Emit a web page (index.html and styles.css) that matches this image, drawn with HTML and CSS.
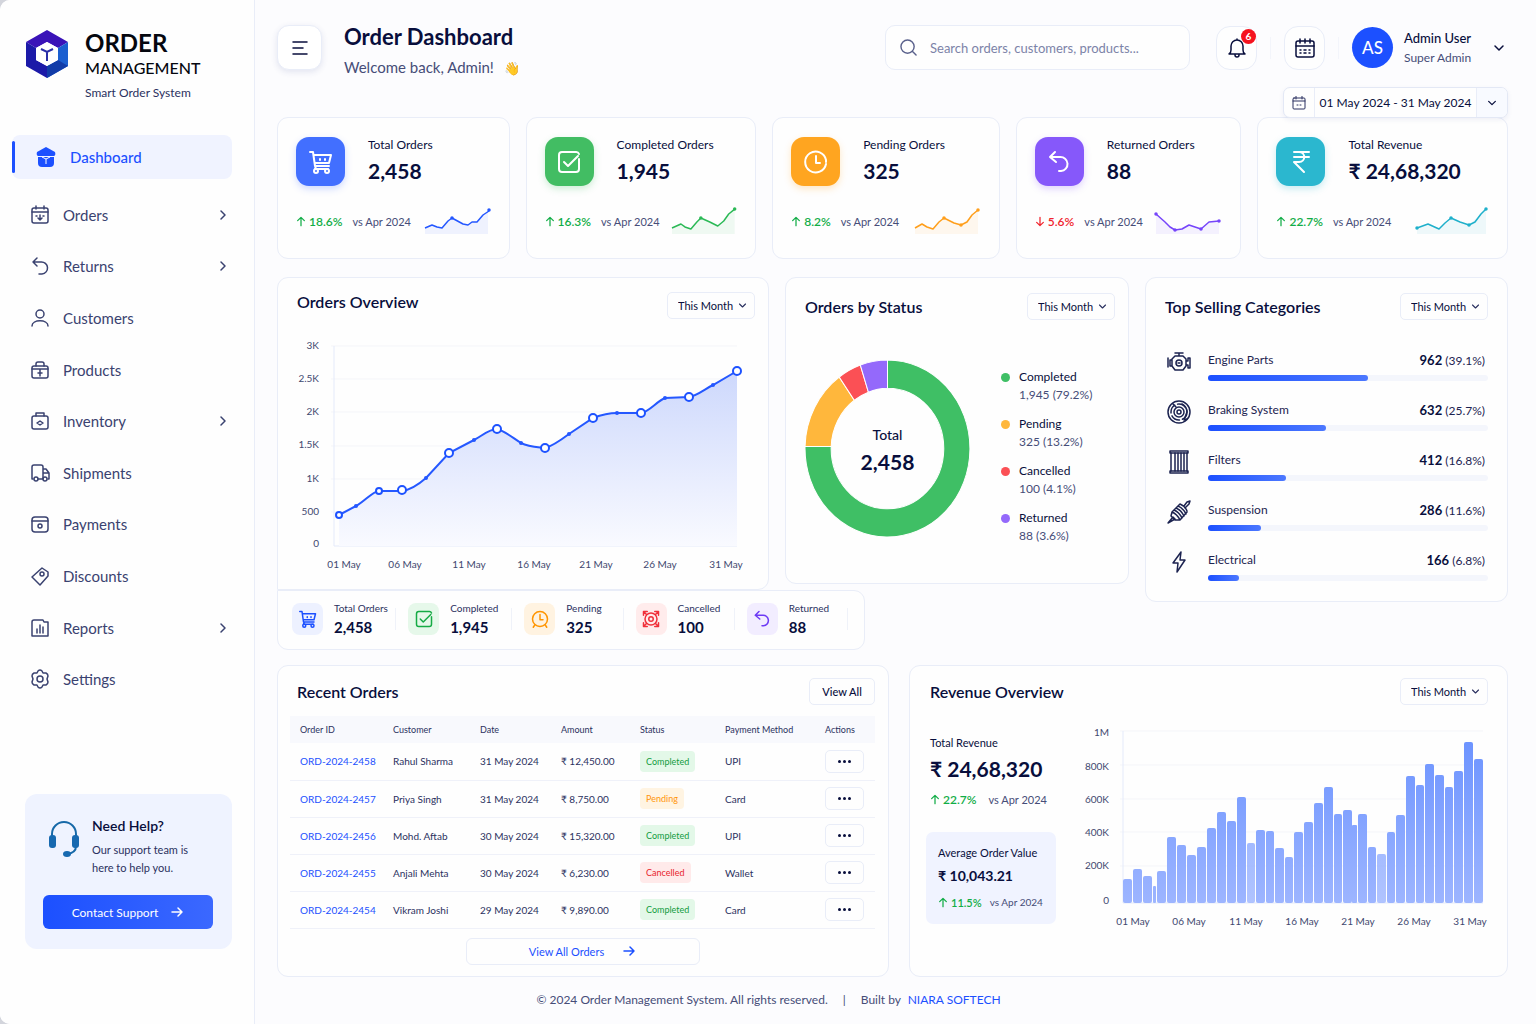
FILE: index.html
```html
<!DOCTYPE html>
<html lang="en">
<head>
    <meta charset="UTF-8">
    <meta name="viewport" content="width=device-width, initial-scale=1.0">
    <title>Order Dashboard</title>
    <link rel="stylesheet" href="styles.css">
</head>
<body>
    <!-- shared icons -->
    <svg class="sprite" aria-hidden="true">
        <symbol id="chev-right" viewBox="0 0 12 12"><path d="M4 2l4 4-4 4"/></symbol>
        <symbol id="chev-down" viewBox="0 0 12 12"><path d="M2 4l4 4 4-4"/></symbol>
        <symbol id="arrow-right" viewBox="0 0 14 14"><path d="M2 7h10M8 3l4 4-4 4"/></symbol>
        <symbol id="arrow-up" viewBox="0 0 12 12"><path d="M6 11V2M2 5l4-4 4 4"/></symbol>
        <symbol id="arrow-down" viewBox="0 0 12 12"><path d="M6 1v9M2 7l4 4 4-4"/></symbol>
        <symbol id="cart" viewBox="0 0 24 24"><path d="M1 2h3l2 14h14M5 5h17l-2 8H6M7 16l-1 3h13"/><circle cx="7" cy="21" r="2"/><circle cx="18" cy="21" r="2"/><path d="M11 9v1M16 9v1"/></symbol>
        <symbol id="check" viewBox="0 0 24 24"><path d="M22 9v10a3 3 0 0 1-3 3H5a3 3 0 0 1-3-3V5a3 3 0 0 1 3-3h14a3 3 0 0 1 3 2"/><path d="M7 12l4 4L21 6"/></symbol>
        <symbol id="clock" viewBox="0 0 24 24"><path d="M22 10a10.500 10.500 0 1 0 0 4M22 10v2"/><path d="M12 6v7h4"/></symbol>
        <symbol id="undo" viewBox="0 0 24 24"><path d="M8 2L3 7l6 5M3 7h10a7 7 0 0 1 1 14h-2"/></symbol>
    </svg>

    <div class="app">
        <aside class="sidebar">
            <div class="brand">
                <svg class="brand-logo" viewBox="0 0 42 48">
                    <path d="M21 0L42 12 32 18 21 12 10 18 0 12z" fill="#3a13b8"/>
                    <path d="M0 12l10 6v12L21 36v12L0 36z" fill="#1c1aa8"/>
                    <path d="M42 12v24L21 48V36l11-6V18z" fill="#1b5fd0"/>
                    <path d="M21 36l11-6 10 6-21 12z" fill="#123ca8"/>
                    <path d="M21 12l11 6v12l-11 6-11-6V18z" fill="#fff"/>
                    <path d="M15 19l6 3 6-3M21 22v9" fill="none" stroke="#2a2fa8" stroke-width="2"/>
                </svg>
                <div>
                    <div class="brand-name">ORDER</div>
                    <div class="brand-sub">MANAGEMENT</div>
                    <div class="brand-tag">Smart Order System</div>
                </div>
            </div>

            <a class="nav-active" href="#">
                <svg viewBox="0 0 20 20"><path d="M10 0l9 5q1 3-1 4H2Q0 8 1 5z"/><path d="M2 10h16v6q0 4-4 4H6q-4 0-4-4z"/><path d="M6 10l4 2 4-2M10 12v5" stroke="#fff" fill="none"/></svg>
                Dashboard
            </a>

            <nav class="nav">
                <a href="#"><svg class="icon" viewBox="0 0 20 20"><rect x="2" y="3" width="16" height="15" rx="2"/><path d="M2 7h16M6 1v3M14 1v3M6 11h1M13 11h1M10 10v5M8 13l2 2 2-2"/></svg><span>Orders</span><svg class="icon chev"><use href="#chev-right"/></svg></a>
                <a href="#"><svg class="icon" viewBox="0 0 20 20"><path d="M7 2L3 6l4 4M3 6h8a6 6 0 0 1 1 12H9"/></svg><span>Returns</span><svg class="icon chev"><use href="#chev-right"/></svg></a>
                <a href="#"><svg class="icon" viewBox="0 0 20 20"><circle cx="10" cy="6" r="4"/><path d="M2 18c0-7 16-7 16 0"/></svg><span>Customers</span></a>
                <a href="#"><svg class="icon" viewBox="0 0 20 20"><rect x="2" y="6" width="16" height="12" rx="2"/><path d="M6 6V4a2 2 0 0 1 2-2h4a2 2 0 0 1 2 2v2M2 9h16M10 10v6M8 13h4"/></svg><span>Products</span></a>
                <a href="#"><svg class="icon" viewBox="0 0 20 20"><rect x="2" y="5" width="16" height="13" rx="2"/><path d="M6 5V2h8v3M7 12l3-2 3 2-3 2z"/></svg><span>Inventory</span><svg class="icon chev"><use href="#chev-right"/></svg></a>
                <a href="#"><svg class="icon" viewBox="0 0 20 20"><path d="M3 16H2V4a2 2 0 0 1 2-2h7a2 2 0 0 1 2 2v12H8M13 6h3l3 4v6h-1M13 10h5"/><circle cx="6" cy="16" r="2"/><circle cx="15" cy="16" r="2"/></svg><span>Shipments</span></a>
                <a href="#"><svg class="icon" viewBox="0 0 20 20"><rect x="2" y="3" width="16" height="15" rx="3"/><path d="M2 7h16"/><circle cx="10" cy="12" r="2"/></svg><span>Payments</span></a>
                <a href="#"><svg class="icon" viewBox="0 0 20 20"><path d="M12 2l6 4v4l-8 9-8-8z"/><circle cx="12" cy="8" r="2"/></svg><span>Discounts</span></a>
                <a href="#"><svg class="icon" viewBox="0 0 20 20"><path d="M13 2H4a2 2 0 0 0-2 2v14h16V4h-4zM7 11v4M10 7v8M13 9v6"/></svg><span>Reports</span><svg class="icon chev"><use href="#chev-right"/></svg></a>
                <a href="#"><svg class="icon" viewBox="0 0 20 20"><path d="M8 2q2-2 4 0l1 2 3 0q2 1 2 3l-1 3 1 3q0 2-2 3l-3 0-1 2q-2 2-4 0l-1-2-3 0q-2-1-2-3l1-3-1-3q0-2 2-3l3 0z"/><circle cx="10" cy="10" r="3"/></svg><span>Settings</span></a>
            </nav>

            <div class="help">
                <div class="help-top">
                    <svg class="help-icon" viewBox="0 0 32 36">
                        <path d="M4 15v-2a12 12 0 0 1 24 0v2M28 25q0 7-9 8" fill="none" stroke="#1769a8" stroke-width="2"/>
                        <rect x="1" y="14" width="7" height="13" rx="3" fill="#1769b0"/>
                        <rect x="24" y="14" width="7" height="13" rx="3" fill="#1769b0"/>
                        <ellipse cx="19" cy="33" rx="4" ry="3" fill="#1769b0"/>
                    </svg>
                    <div>
                        <h3>Need Help?</h3>
                        <p>Our support team is here to help you.</p>
                    </div>
                </div>
                <button class="help-btn">Contact Support <svg class="icon"><use href="#arrow-right"/></svg></button>
            </div>
        </aside>

        <main class="main">
            <header class="topbar">
                <button class="menu-btn" aria-label="Menu"><svg class="icon" viewBox="0 0 16 14"><path d="M1 1h14M1 7h10M1 13h14"/></svg></button>
                <div class="page-title">
                    <h1>Order Dashboard</h1>
                    <p>Welcome back, Admin! <span class="wave">👋</span></p>
                </div>
                <label class="search">
                    <svg class="icon" viewBox="0 0 18 18"><circle cx="8" cy="8" r="7"/><path d="M13 13l4 4"/></svg>
                    <input type="text" aria-label="Search" placeholder="Search orders, customers, products...">
                </label>
                <button class="top-btn" aria-label="Notifications">
                    <svg class="icon" viewBox="0 0 20 20"><path d="M10 1v1M2 16h16q-2-1-2-4V8a6 6 0 0 0-12 0v4q0 3-2 4zM8 17a2 2 0 0 0 4 0"/></svg>
                    <span class="badge">6</span>
                </button>
                <span class="top-sep"></span>
                <button class="top-btn" aria-label="Calendar">
                    <svg class="icon" viewBox="0 0 20 20"><rect x="1" y="3" width="18" height="16" rx="2"/><path d="M1 8h18M5 1v4M10 1v4M15 1v4M5 12h1M9 12h2M14 12h1M5 15h1M9 15h2M14 15h1"/></svg>
                </button>
                <span class="top-sep"></span>
                <div class="avatar">AS</div>
                <div class="user">
                    <div class="user-name">Admin User</div>
                    <div class="user-role">Super Admin</div>
                </div>
                <button class="user-more" aria-label="Account menu"><svg class="icon"><use href="#chev-down"/></svg></button>
            </header>

            <div class="date-row">
                <button class="date-range">
                    <span class="date-icon"><svg class="icon" viewBox="0 0 14 14"><rect x="1" y="2" width="12" height="11" rx="1"/><path d="M1 5h12M4 0v3M10 0v3M5 9h1M8 9h1"/></svg></span>
                    <span class="date-text">01 May 2024 - 31 May 2024</span>
                    <span class="date-chev"><svg class="icon"><use href="#chev-down"/></svg></span>
                </button>
            </div>

            <section class="stats">
                <div class="card stat">
                    <div class="stat-top">
                        <div class="tile blue"><svg class="icon"><use href="#cart"/></svg></div>
                        <div><div class="stat-label">Total Orders</div><div class="stat-value">2,458</div></div>
                    </div>
                    <div class="stat-bottom">
                        <span class="pct up"><svg class="icon"><use href="#arrow-up"/></svg>18.6%</span><span class="vs">vs Apr 2024</span>
                        <svg class="spark c-blue" viewBox="0 0 68 30"><path class="fill" d="M2 22L9 19 19 22 29 12 44 19 49 16 53 16 65 5V28H2z"/><path d="M2 22L9 19 14 21 19 22 25 15 29 12 40 18 45 19 49 16 54 16 60 9 66 5"/><circle cx="29" cy="12" r="1"/><circle cx="66" cy="4" r="1"/></svg>
                    </div>
                </div>
                <div class="card stat">
                    <div class="stat-top">
                        <div class="tile green"><svg class="icon"><use href="#check"/></svg></div>
                        <div><div class="stat-label">Completed Orders</div><div class="stat-value">1,945</div></div>
                    </div>
                    <div class="stat-bottom">
                        <span class="pct up"><svg class="icon"><use href="#arrow-up"/></svg>16.3%</span><span class="vs">vs Apr 2024</span>
                        <svg class="spark c-green" viewBox="0 0 68 30"><path class="fill" d="M2 22L11 18 21 23 31 12 48 20 65 3V28H2z"/><path d="M2 22L11 18 15 21 21 23 27 16 31 12 40 16 48 20 54 15 59 8 65 3"/><circle cx="31" cy="12" r="1"/><circle cx="65" cy="3" r="1"/></svg>
                    </div>
                </div>
                <div class="card stat">
                    <div class="stat-top">
                        <div class="tile orange"><svg class="icon"><use href="#clock"/></svg></div>
                        <div><div class="stat-label">Pending Orders</div><div class="stat-value">325</div></div>
                    </div>
                    <div class="stat-bottom">
                        <span class="pct up"><svg class="icon"><use href="#arrow-up"/></svg>8.2%</span><span class="vs">vs Apr 2024</span>
                        <svg class="spark c-orange" viewBox="0 0 68 30"><path class="fill" d="M2 22L9 18 20 23 31 12 48 19 65 4V28H2z"/><path d="M2 22L9 18 14 21 20 23 26 16 31 12 41 17 48 19 54 16 59 9 65 4"/><circle cx="31" cy="12" r="1"/><circle cx="48" cy="19" r="1"/><circle cx="65" cy="4" r="1"/></svg>
                    </div>
                </div>
                <div class="card stat">
                    <div class="stat-top">
                        <div class="tile purple"><svg class="icon"><use href="#undo"/></svg></div>
                        <div><div class="stat-label">Returned Orders</div><div class="stat-value">88</div></div>
                    </div>
                    <div class="stat-bottom">
                        <span class="pct down"><svg class="icon"><use href="#arrow-down"/></svg>5.6%</span><span class="vs">vs Apr 2024</span>
                        <svg class="spark c-purple" viewBox="0 0 68 30"><path class="fill" d="M2 8L11 16 21 24 35 19 47 23 55 16 65 15V28H2z"/><path d="M2 8L11 16 16 21 21 24 28 23 35 19 47 23 55 16 65 15"/><circle cx="2" cy="8" r="1"/><circle cx="21" cy="24" r="1"/><circle cx="47" cy="23" r="1"/><circle cx="65" cy="15" r="1"/></svg>
                    </div>
                </div>
                <div class="card stat">
                    <div class="stat-top">
                        <div class="tile teal"><svg class="icon" viewBox="0 0 24 24"><path d="M5 2h15M5 7h15M5 2h5c7 0 7 10 0 10H5l10 10"/></svg></div>
                        <div><div class="stat-label">Total Revenue</div><div class="stat-value">₹ 24,68,320</div></div>
                    </div>
                    <div class="stat-bottom">
                        <span class="pct up"><svg class="icon"><use href="#arrow-up"/></svg>22.7%</span><span class="vs">vs Apr 2024</span>
                        <svg class="spark wide c-teal" viewBox="0 0 74 30"><path class="fill" d="M2 22L13 18 24 23 36 12 54 19 71 3V28H2z"/><path d="M2 22L13 18 24 23 30 17 36 12 45 16 54 19 60 16 66 8 71 3"/><circle cx="2" cy="22" r="1"/><circle cx="36" cy="12" r="1"/><circle cx="54" cy="19" r="1"/><circle cx="71" cy="3" r="1"/></svg>
                    </div>
                </div>
            </section>

            <section class="middle">
                <div class="card overview">
                    <div class="card-head">
                        <h2>Orders Overview</h2>
                        <div class="select"><select aria-label="Orders period"><option>This Month</option></select><svg class="icon"><use href="#chev-down"/></svg></div>
                    </div>
                    <svg class="chart" viewBox="0 0 458 236">
                        <defs>
                            <linearGradient id="area" x1="0" y1="0" x2="0" y2="1">
                                <stop offset="0" stop-color="#cdd8fc"/>
                                <stop offset="1" stop-color="#f9faff"/>
                            </linearGradient>
                        </defs>
                        <path class="grid" d="M34 10H440M34 43H440M34 76H440M34 110H440M34 143H440M34 176H440"/>
                        <path class="axis" d="M37 10V210H440"/>
                        <path fill="url(#area)" d="M42 179L59 170C67 166 76 155 82 155H105C113 154 121 149 129 142L152 117 177 104C185 100 192 93 200 93 208 95 216 102 224 107 232 111 240 111 248 112 256 110 264 104 272 98L296 82C304 79 312 77 320 77H344C352 76 360 65 368 62L392 61C400 60 408 53 416 49L440 35V210H42z"/>
                        <path class="line" d="M42 179L59 170C67 166 76 155 82 155H105C113 154 121 149 129 142L152 117 177 104C185 100 192 93 200 93 208 95 216 102 224 107 232 111 240 111 248 112 256 110 264 104 272 98L296 82C304 79 312 77 320 77H344C352 76 360 65 368 62L392 61C400 60 408 53 416 49L440 35"/>
                        <g class="dots">
                            <circle cx="59" cy="170" r="2"/><circle cx="129" cy="142" r="2"/><circle cx="177" cy="104" r="2"/><circle cx="224" cy="107" r="2"/><circle cx="272" cy="98" r="2"/><circle cx="320" cy="77" r="2"/><circle cx="368" cy="62" r="2"/><circle cx="416" cy="49" r="2"/>
                        </g>
                        <g class="rings">
                            <circle cx="42" cy="179" r="3"/><circle cx="82" cy="155" r="3"/><circle cx="105" cy="154" r="4"/><circle cx="152" cy="117" r="4"/><circle cx="200" cy="93" r="4"/><circle cx="248" cy="112" r="4"/><circle cx="296" cy="82" r="4"/><circle cx="344" cy="77" r="4"/><circle cx="392" cy="61" r="4"/><circle cx="440" cy="35" r="4"/>
                        </g>
                        <g class="y-labels">
                            <text x="22" y="13">3K</text><text x="22" y="46">2.5K</text><text x="22" y="79">2K</text><text x="22" y="112">1.5K</text><text x="22" y="146">1K</text><text x="22" y="179">500</text><text x="22" y="211">0</text>
                        </g>
                        <g class="x-labels">
                            <text x="47" y="232">01 May</text><text x="108" y="232">06 May</text><text x="172" y="232">11 May</text><text x="237" y="232">16 May</text><text x="299" y="232">21 May</text><text x="363" y="232">26 May</text><text x="429" y="232">31 May</text>
                        </g>
                    </svg>
                </div>

                <div class="card status">
                    <div class="card-head">
                        <h2>Orders by Status</h2>
                        <div class="select"><select aria-label="Status period"><option>This Month</option></select><svg class="icon"><use href="#chev-down"/></svg></div>
                    </div>
                    <div class="status-body">
                        <svg class="donut" viewBox="0 0 164 176">
                            <path fill="#3fbf65" d="M82 0A82 88 0 1 1 0 86H26A56 60 0 1 0 82 28z"/>
                            <path fill="#ffb73c" d="M0 86A82 88 0 0 1 34 17L49 40A56 60 0 0 0 26 86z"/>
                            <path fill="#fb5055" d="M34 17A82 88 0 0 1 55 5L63 32A56 60 0 0 0 49 40z"/>
                            <path fill="#9469fb" d="M55 5A82 88 0 0 1 82 0V28A56 60 0 0 0 63 32z"/>
                            <text class="donut-label" x="82" y="80">Total</text>
                            <text class="donut-value" x="82" y="109">2,458</text>
                        </svg>
                        <ul class="legend">
                            <li class="l-green">Completed<span>1,945 (79.2%)</span></li>
                            <li class="l-orange">Pending<span>325 (13.2%)</span></li>
                            <li class="l-red">Cancelled<span>100 (4.1%)</span></li>
                            <li class="l-purple">Returned<span>88 (3.6%)</span></li>
                        </ul>
                    </div>
                </div>

                <div class="card categories">
                    <div class="card-head">
                        <h2>Top Selling Categories</h2>
                        <div class="select"><select aria-label="Categories period"><option>This Month</option></select><svg class="icon"><use href="#chev-down"/></svg></div>
                    </div>
                    <div class="category">
                        <svg class="icon" viewBox="0 0 24 24"><path d="M8 3h8M12 3v3M8 6h8l3 3v7l-3 4H8l-3-4V9zM5 10H3v6h2M1 8v9M19 11h2V8h2v10h-2v-3h-2"/><circle cx="12" cy="13" r="3"/><path d="M11 13h2"/></svg>
                        <div class="category-info">
                            <div class="category-text"><span>Engine Parts</span><span><b>962</b> (39.1%)</span></div>
                            <div class="bar"><div style="width: 57%"></div></div>
                        </div>
                    </div>
                    <div class="category">
                        <svg class="icon" viewBox="0 0 24 24"><circle cx="12" cy="12" r="11"/><circle cx="12" cy="12" r="8" stroke-dasharray="9 3"/><circle cx="12" cy="12" r="5"/><circle cx="12" cy="12" r="2"/><path d="M15 4q5 3 5 8l-3 8 3-1M6 4l3 3"/></svg>
                        <div class="category-info">
                            <div class="category-text"><span>Braking System</span><span><b>632</b> (25.7%)</span></div>
                            <div class="bar"><div style="width: 42%"></div></div>
                        </div>
                    </div>
                    <div class="category">
                        <svg class="icon" viewBox="0 0 24 24"><rect x="3" y="1" width="18" height="2"/><rect x="3" y="21" width="18" height="2"/><path d="M4 3v18M8 3v18M11 3v18M14 3v18M17 3v18M20 3v18"/></svg>
                        <div class="category-info">
                            <div class="category-text"><span>Filters</span><span><b>412</b> (16.8%)</span></div>
                            <div class="bar"><div style="width: 28%"></div></div>
                        </div>
                    </div>
                    <div class="category">
                        <svg class="icon" viewBox="0 0 24 24"><path d="M1 23l5-6 2 2zM17 6l3-4 3-1-1 3-4 4M5 12q5 2 8 8M7 10q5 2 8 8M9 8q5 2 8 8M11 6q5 2 8 8M13 4q5 2 7 7M5 12l-1 4 4 4 5 0M5 12l8-8M13 20l7-8"/></svg>
                        <div class="category-info">
                            <div class="category-text"><span>Suspension</span><span><b>286</b> (11.6%)</span></div>
                            <div class="bar"><div style="width: 19%"></div></div>
                        </div>
                    </div>
                    <div class="category">
                        <svg class="icon" viewBox="0 0 24 24"><path d="M14 2L6 13h5l-1 9 8-12h-5z"/></svg>
                        <div class="category-info">
                            <div class="category-text"><span>Electrical</span><span><b>166</b> (6.8%)</span></div>
                            <div class="bar"><div style="width: 11%"></div></div>
                        </div>
                    </div>
                </div>

                <div class="card summary">
                    <div class="summary-item"><div class="mini m-blue"><svg class="icon"><use href="#cart"/></svg></div><div>Total Orders<b>2,458</b></div></div>
                    <div class="summary-item"><div class="mini m-green"><svg class="icon"><use href="#check"/></svg></div><div>Completed<b>1,945</b></div></div>
                    <div class="summary-item"><div class="mini m-orange"><svg class="icon" viewBox="0 0 24 24"><circle cx="12" cy="12" r="10"/><path d="M12 6v7h4M5 20l-2 3M19 20l2 3"/></svg></div><div>Pending<b>325</b></div></div>
                    <div class="summary-item"><div class="mini m-red"><svg class="icon" viewBox="0 0 24 24"><circle cx="12" cy="12" r="8"/><circle cx="12" cy="12" r="3"/><path d="M2 7V2h5M17 2h5v5M22 17v5h-5M7 22H2v-5M2 2l4 4M22 2l-4 4M2 22l4-4M22 22l-4-4"/></svg></div><div>Cancelled<b>100</b></div></div>
                    <div class="summary-item"><div class="mini m-purple"><svg class="icon"><use href="#undo"/></svg></div><div>Returned<b>88</b></div></div>
                </div>
            </section>

            <section class="bottom">
                <div class="card recent">
                    <div class="card-head">
                        <h2>Recent Orders</h2>
                        <button class="view-all">View All</button>
                    </div>
                    <table>
                        <colgroup><col class="c1"><col class="c2"><col class="c3"><col class="c4"><col class="c5"><col class="c6"><col class="c7"></colgroup>
                        <thead>
                            <tr><th>Order ID</th><th>Customer</th><th>Date</th><th>Amount</th><th>Status</th><th>Payment Method</th><th>Actions</th></tr>
                        </thead>
                        <tbody>
                            <tr><td><a href="#">ORD-2024-2458</a></td><td>Rahul Sharma</td><td>31 May 2024</td><td>₹ 12,450.00</td><td><span class="tag completed">Completed</span></td><td>UPI</td><td><button class="dots-btn" aria-label="Actions"><i></i><i></i><i></i></button></td></tr>
                            <tr><td><a href="#">ORD-2024-2457</a></td><td>Priya Singh</td><td>31 May 2024</td><td>₹ 8,750.00</td><td><span class="tag pending">Pending</span></td><td>Card</td><td><button class="dots-btn" aria-label="Actions"><i></i><i></i><i></i></button></td></tr>
                            <tr><td><a href="#">ORD-2024-2456</a></td><td>Mohd. Aftab</td><td>30 May 2024</td><td>₹ 15,320.00</td><td><span class="tag completed">Completed</span></td><td>UPI</td><td><button class="dots-btn" aria-label="Actions"><i></i><i></i><i></i></button></td></tr>
                            <tr><td><a href="#">ORD-2024-2455</a></td><td>Anjali Mehta</td><td>30 May 2024</td><td>₹ 6,230.00</td><td><span class="tag cancelled">Cancelled</span></td><td>Wallet</td><td><button class="dots-btn" aria-label="Actions"><i></i><i></i><i></i></button></td></tr>
                            <tr><td><a href="#">ORD-2024-2454</a></td><td>Vikram Joshi</td><td>29 May 2024</td><td>₹ 9,890.00</td><td><span class="tag completed">Completed</span></td><td>Card</td><td><button class="dots-btn" aria-label="Actions"><i></i><i></i><i></i></button></td></tr>
                        </tbody>
                    </table>
                    <button class="view-orders">View All Orders <svg class="icon"><use href="#arrow-right"/></svg></button>
                </div>

                <div class="card revenue">
                    <div class="card-head">
                        <h2>Revenue Overview</h2>
                        <div class="select"><select aria-label="Revenue period"><option>This Month</option></select><svg class="icon"><use href="#chev-down"/></svg></div>
                    </div>
                    <div class="revenue-body">
                        <div class="revenue-side">
                            <div class="revenue-total">
                                <div class="revenue-label">Total Revenue</div>
                                <div class="stat-value">₹ 24,68,320</div>
                                <div class="change"><span class="pct up"><svg class="icon"><use href="#arrow-up"/></svg>22.7%</span><span class="vs">vs Apr 2024</span></div>
                            </div>
                            <div class="average">
                                <div class="revenue-label">Average Order Value</div>
                                <div class="average-value">₹ 10,043.21</div>
                                <div class="change"><span class="pct up"><svg class="icon"><use href="#arrow-up"/></svg>11.5%</span><span class="vs">vs Apr 2024</span></div>
                            </div>
                        </div>
                        <svg class="chart" viewBox="0 0 408 204">
                            <defs>
                                <linearGradient id="bars" gradientUnits="userSpaceOnUse" x1="0" y1="18" x2="0" y2="179">
                                    <stop offset="0" stop-color="#6d94ff"/>
                                    <stop offset="1" stop-color="#9db5ff"/>
                                </linearGradient>
                            </defs>
                            <path class="grid" d="M40 7H403M40 41H403M40 75H403M40 108H403M40 142H403"/>
                            <path class="axis" d="M43 7V179H403"/>
                            <g fill="url(#bars)">
                                <rect x="43" y="155" width="9" height="24" rx="2"/>
                                <rect x="53" y="145" width="9" height="34" rx="2"/>
                                <rect x="63" y="152" width="9" height="27" rx="2"/>
                                <rect x="73" y="162" width="3" height="17" rx="1"/>
                                <rect x="77" y="147" width="9" height="32" rx="2"/>
                                <rect x="87" y="113" width="9" height="66" rx="2"/>
                                <rect x="97" y="121" width="9" height="58" rx="2"/>
                                <rect x="107" y="131" width="9" height="48" rx="2"/>
                                <rect x="117" y="123" width="9" height="56" rx="2"/>
                                <rect x="127" y="104" width="9" height="75" rx="2"/>
                                <rect x="137" y="88" width="9" height="91" rx="2"/>
                                <rect x="147" y="97" width="9" height="82" rx="2"/>
                                <rect x="157" y="73" width="9" height="106" rx="2"/>
                                <rect x="167" y="119" width="8" height="60" rx="2" opacity=".8"/>
                                <rect x="176" y="106" width="9" height="73" rx="2"/>
                                <rect x="186" y="107" width="8" height="72" rx="2"/>
                                <rect x="195" y="124" width="9" height="55" rx="2"/>
                                <rect x="205" y="133" width="8" height="46" rx="2"/>
                                <rect x="214" y="108" width="9" height="71" rx="2"/>
                                <rect x="224" y="98" width="9" height="81" rx="2"/>
                                <rect x="234" y="79" width="9" height="100" rx="2"/>
                                <rect x="244" y="63" width="9" height="116" rx="2"/>
                                <rect x="254" y="90" width="8" height="89" rx="2"/>
                                <rect x="263" y="86" width="9" height="93" rx="2"/>
                                <rect x="272" y="101" width="5" height="78" rx="1"/>
                                <rect x="278" y="90" width="9" height="89" rx="2"/>
                                <rect x="288" y="123" width="8" height="56" rx="2"/>
                                <rect x="297" y="130" width="9" height="49" rx="2" opacity=".8"/>
                                <rect x="307" y="108" width="8" height="71" rx="2"/>
                                <rect x="316" y="91" width="9" height="88" rx="2"/>
                                <rect x="326" y="52" width="9" height="127" rx="2"/>
                                <rect x="336" y="61" width="8" height="118" rx="2"/>
                                <rect x="345" y="40" width="9" height="139" rx="2"/>
                                <rect x="355" y="51" width="9" height="128" rx="2"/>
                                <rect x="365" y="63" width="8" height="116" rx="2"/>
                                <rect x="374" y="47" width="9" height="132" rx="2"/>
                                <rect x="384" y="18" width="9" height="161" rx="2"/>
                                <rect x="394" y="35" width="9" height="144" rx="2"/>
                            </g>
                            <g class="y-labels">
                                <text x="29" y="12">1M</text><text x="29" y="46">800K</text><text x="29" y="79">600K</text><text x="29" y="112">400K</text><text x="29" y="145">200K</text><text x="29" y="180">0</text>
                            </g>
                            <g class="x-labels">
                                <text x="53" y="201">01 May</text><text x="109" y="201">06 May</text><text x="166" y="201">11 May</text><text x="222" y="201">16 May</text><text x="278" y="201">21 May</text><text x="334" y="201">26 May</text><text x="390" y="201">31 May</text>
                            </g>
                        </svg>
                    </div>
                </div>
            </section>

            <footer class="footer">
                <span>© 2024 Order Management System. All rights reserved.</span>
                <span>|</span>
                <span>Built by <a href="#">NIARA SOFTECH</a></span>
            </footer>
        </main>
    </div>
</body>
</html>
```
FILE: styles.css
```css
:root {
    --primary: #1c50ff;
    --dark: #080e3c;
    --text: #2b3160;
    --muted: #464d78;
    --border: #e9edf8;
    --green: #12ad47;
    --red: #f0242d;
}

* {
    margin: 0;
    padding: 0;
    box-sizing: border-box;
}

body {
    font-family: Lato, "Noto Sans", sans-serif;
    background-color: #d3d5dc;
    color: var(--text);
    font-size: 12px;
}

button, input, select {
    font-family: inherit;
    color: inherit;
}

button {
    cursor: pointer;
}

a {
    color: var(--primary);
    text-decoration: none;
}

.sprite {
    display: none;
}

.icon {
    fill: none;
    stroke: currentColor;
    stroke-width: 1.5;
    stroke-linecap: round;
    stroke-linejoin: round;
    flex-shrink: 0;
}

.app {
    display: flex;
    min-height: 100vh;
    background-color: #fcfcfe;
    border-radius: 10px 0 0 10px;
    overflow: hidden;
}

/* Sidebar */
.sidebar {
    width: 255px;
    flex-shrink: 0;
    display: flex;
    flex-direction: column;
    background-color: #fefefe;
    border-right: 1px solid var(--border);
    padding: 30px 22px 75px 12px;
}

.brand {
    display: flex;
    gap: 17px;
    padding-left: 14px;
    margin-bottom: 29px;
}

.brand-logo {
    width: 42px;
    height: 48px;
}

.brand-name {
    font-size: 24px;
    line-height: 26px;
    font-weight: 700;
    color: #05070f;
}

.brand-sub {
    font-size: 16px;
    line-height: 24px;
    font-weight: 500;
    color: #05070f;
}

.brand-tag {
    font-size: 12px;
    line-height: 26px;
}

.nav-active {
    display: flex;
    align-items: center;
    gap: 14px;
    height: 44px;
    padding-left: 24px;
    border-radius: 8px;
    background-color: #f0f3ff;
    font-size: 15px;
    font-weight: 500;
    position: relative;
}

.nav-active::before {
    content: "";
    position: absolute;
    left: 0;
    top: 6px;
    bottom: 6px;
    width: 3px;
    border-radius: 2px;
    background-color: var(--primary);
}

.nav-active svg {
    width: 20px;
    height: 20px;
    fill: var(--primary);
}

.nav {
    display: grid;
    grid-auto-rows: 1fr;
    height: 516px;
    margin-top: 10px;
    padding-left: 18px;
}

.nav a {
    display: flex;
    align-items: center;
    gap: 13px;
    color: #3a4270;
    font-size: 15px;
}

.nav a .icon {
    width: 20px;
    height: 20px;
}

.nav a .chev {
    width: 12px;
    height: 12px;
    margin-left: auto;
    margin-right: 3px;
}

.help {
    margin-top: auto;
    margin-left: 13px;
    padding: 22px 19px 20px 18px;
    border-radius: 12px;
    background-color: #eff3ff;
}

.help-top {
    display: flex;
    gap: 12px;
    padding-left: 5px;
}

.help-icon {
    width: 32px;
    height: 36px;
    margin-top: 5px;
    flex-shrink: 0;
}

.help h3 {
    font-size: 14px;
    line-height: 20px;
    font-weight: 600;
    color: var(--dark);
    margin-bottom: 5px;
}

.help p {
    font-size: 11px;
    line-height: 18px;
    padding-right: 10px;
}

.help-btn {
    display: flex;
    align-items: center;
    justify-content: center;
    gap: 12px;
    width: 100%;
    height: 34px;
    margin-top: 18px;
    border: none;
    border-radius: 6px;
    background: linear-gradient(90deg, #1c50ff, #3b68ff);
    color: #fff;
    font-size: 12px;
}

.help-btn .icon {
    width: 14px;
    height: 14px;
}

/* Top bar */
.main {
    flex: 1;
    min-width: 0;
    padding: 25px 28px 0 22px;
}

.topbar {
    display: flex;
    align-items: center;
    height: 45px;
}

.menu-btn {
    display: flex;
    align-items: center;
    justify-content: center;
    width: 45px;
    height: 45px;
    border: 1px solid var(--border);
    border-radius: 12px;
    background-color: #fff;
    color: var(--dark);
    box-shadow: 0 2px 6px rgba(40, 60, 140, 0.12);
}

.menu-btn .icon {
    width: 16px;
    height: 14px;
}

.page-title {
    margin-left: 22px;
    margin-right: auto;
    padding-top: 4px;
}

.page-title h1 {
    font-size: 22px;
    line-height: 32px;
    font-weight: 700;
    color: var(--dark);
}

.page-title p {
    font-size: 15px;
    line-height: 22px;
    margin-top: 3px;
    color: var(--muted);
}

.wave {
    font-size: 13px;
    margin-left: 6px;
}

.search {
    display: flex;
    align-items: center;
    gap: 13px;
    width: 305px;
    height: 45px;
    padding: 0 14px;
    margin-right: 26px;
    border: 1px solid var(--border);
    border-radius: 10px;
    background-color: #fefefe;
    color: #5a618c;
}

.search .icon {
    width: 17px;
    height: 17px;
}

.search input {
    flex: 1;
    min-width: 0;
    border: none;
    outline: none;
    background: none;
    font-size: 13px;
}

.search input::placeholder {
    color: #7c83a8;
}

.top-btn {
    position: relative;
    display: flex;
    align-items: center;
    justify-content: center;
    width: 41px;
    height: 44px;
    border: 1px solid var(--border);
    border-radius: 14px;
    background-color: #fefefe;
    color: var(--dark);
}

.top-btn .icon {
    width: 20px;
    height: 20px;
}

.badge {
    position: absolute;
    top: 2px;
    right: 0;
    width: 15px;
    height: 15px;
    border-radius: 50%;
    background-color: #f5131f;
    color: #fff;
    font-size: 10px;
    line-height: 15px;
    font-weight: 700;
}

.top-sep {
    width: 1px;
    height: 22px;
    margin: 0 13px;
    background-color: #f3f5fb;
}

.avatar {
    width: 41px;
    height: 41px;
    border-radius: 50%;
    background-color: var(--primary);
    color: #fff;
    font-size: 17px;
    line-height: 41px;
    font-weight: 500;
    text-align: center;
}

.user {
    width: 84px;
    margin-left: 11px;
}

.user-name {
    font-size: 13px;
    line-height: 20px;
    font-weight: 500;
    color: var(--dark);
}

.user-role {
    font-size: 12px;
    line-height: 20px;
    color: var(--muted);
}

.user-more {
    border: none;
    background: none;
    color: var(--dark);
    padding: 0 3px 0 5px;
}

.user-more .icon {
    display: block;
    width: 12px;
    height: 12px;
}

.date-row {
    display: flex;
    justify-content: flex-end;
    margin-top: 17px;
    margin-bottom: -1px;
}

.date-range {
    display: flex;
    align-items: stretch;
    height: 31px;
    width: 225px;
    border: 1px solid #e3e8f5;
    border-radius: 7px;
    background-color: #fefefe;
    color: var(--dark);
    font-size: 12px;
    box-shadow: 0 2px 5px rgba(40, 60, 140, 0.07);
    z-index: 1;
    overflow: hidden;
}

.date-range span {
    display: flex;
    align-items: center;
    justify-content: center;
}

.date-icon {
    width: 31px;
    border-right: 1px solid var(--border);
    color: var(--text);
}

.date-icon .icon {
    width: 14px;
    height: 14px;
    stroke-width: 1;
}

.date-text {
    flex: 1;
}

.date-chev {
    width: 31px;
    border-left: 1px solid var(--border);
    background-color: #f8faff;
}

.date-chev .icon {
    width: 10px;
    height: 10px;
}

/* Cards */
.card {
    background-color: #fefefe;
    border: 1px solid var(--border);
    border-radius: 11px;
}

.card-head {
    display: flex;
    align-items: center;
    justify-content: space-between;
    height: 27px;
}

.card h2 {
    font-size: 16px;
    line-height: 20px;
    font-weight: 600;
    color: var(--dark);
}

.select {
    position: relative;
}

.select select {
    appearance: none;
    display: block;
    width: 88px;
    height: 27px;
    padding-left: 10px;
    border: 1px solid var(--border);
    border-radius: 5px;
    background-color: #fefefe;
    color: var(--dark);
    font-size: 11px;
}

.select .icon {
    position: absolute;
    right: 8px;
    top: 9px;
    width: 9px;
    height: 9px;
    pointer-events: none;
}

.stats {
    display: grid;
    grid-template-columns: 233fr 231fr 228fr 226fr 251fr;
    gap: 16px;
}

.stat {
    min-width: 0;
    padding: 19px 18px 22px;
}

.stat-top {
    display: flex;
    gap: 23px;
}

.tile {
    display: flex;
    align-items: center;
    justify-content: center;
    width: 49px;
    height: 49px;
    border-radius: 13px;
    color: #fff;
}

.tile .icon {
    width: 24px;
    height: 24px;
    stroke-width: 2;
}

.tile.blue { background-color: #426fff; box-shadow: 0 3px 7px rgba(66, 111, 255, 0.25); }
.tile.green { background-color: #42bd63; box-shadow: 0 3px 7px rgba(66, 189, 99, 0.25); }
.tile.orange { background-color: #ffa520; box-shadow: 0 3px 7px rgba(255, 165, 32, 0.25); }
.tile.purple { background-color: #8658fa; box-shadow: 0 3px 7px rgba(134, 88, 250, 0.25); }
.tile.teal { background-color: #2bb7cf; box-shadow: 0 3px 7px rgba(43, 183, 207, 0.25); }

.stat-label {
    font-size: 12px;
    line-height: 16px;
    color: var(--dark);
}

.stat-value {
    font-size: 21px;
    line-height: 28px;
    margin-top: 4px;
    font-weight: 700;
    color: var(--dark);
}

.stat-bottom {
    display: flex;
    align-items: center;
    gap: 10px;
    margin-top: 20px;
    white-space: nowrap;
}

.pct {
    display: flex;
    align-items: center;
    gap: 3px;
    font-size: 12px;
    font-weight: 600;
}

.pct .icon {
    width: 10px;
    height: 11px;
}

.up { color: var(--green); }
.down { color: var(--red); }

.vs {
    font-size: 11px;
    color: var(--muted);
}

.spark {
    width: 68px;
    height: 30px;
    margin-left: auto;
    fill: none;
    stroke: currentColor;
    stroke-width: 1.5;
    stroke-linejoin: round;
}

.spark.wide {
    width: 74px;
}

.spark circle {
    fill: currentColor;
}

.spark .fill {
    fill: currentColor;
    stroke: none;
    opacity: 0.07;
}

.c-blue { color: #2457ff; }
.c-green { color: #2bb956; }
.c-orange { color: #ff9f1c; }
.c-purple { color: #7645fa; }
.c-teal { color: #1fb0cb; }

/* Middle row */
.middle {
    display: grid;
    grid-template-columns: 492fr 344fr 363fr;
    column-gap: 16px;
    align-items: start;
    margin-top: 18px;
}

.overview {
    padding: 14px 13px 17px 19px;
    border-bottom-left-radius: 0;
}

.chart {
    display: block;
    width: 100%;
}

.overview .chart {
    margin-top: 17px;
}

.overview .card-head {
    align-items: flex-start;
}

.chart text {
    font-size: 10px;
    fill: #41486f;
}

.y-labels text {
    text-anchor: end;
}

.x-labels text {
    text-anchor: middle;
}

.grid {
    stroke: #f4f5f9;
}

.axis {
    fill: none;
    stroke: #e4eafa;
}

.line {
    fill: none;
    stroke: #2558ff;
    stroke-width: 2;
}

.dots circle {
    fill: #2558ff;
}

.rings circle {
    fill: #fff;
    stroke: #1d52ff;
    stroke-width: 2;
}

.status {
    padding: 15px 13px 38px 19px;
}

.status-body {
    display: flex;
    gap: 31px;
    margin-top: 40px;
}

.donut {
    width: 165px;
    height: 177px;
    flex-shrink: 0;
}

.donut path {
    stroke: #fff;
}

.donut text {
    text-anchor: middle;
    fill: var(--dark);
}

.donut-label {
    font-size: 14px;
    font-weight: 500;
}

.donut-value {
    font-size: 21px;
    font-weight: 700;
}

.legend {
    list-style: none;
    display: grid;
    gap: 11px;
    padding-top: 8px;
}

.legend li {
    position: relative;
    padding-left: 18px;
    line-height: 18px;
    color: var(--dark);
}

.legend span {
    display: block;
    color: var(--muted);
}

.legend li::before {
    content: "";
    position: absolute;
    left: 0;
    top: 5px;
    width: 9px;
    height: 9px;
    border-radius: 50%;
}

.l-green::before { background-color: #3fbf65; }
.l-orange::before { background-color: #ffb73c; }
.l-red::before { background-color: #fb5055; }
.l-purple::before { background-color: #9469fb; }

.categories {
    grid-column: 3;
    grid-row: 1 / 3;
    display: grid;
    gap: 19px;
    padding: 15px 19px 20px;
}

.categories .card-head {
    margin-bottom: 11px;
}

.category {
    display: flex;
    gap: 17px;
    color: #1c2350;
}

.category .icon {
    width: 24px;
    height: 24px;
    margin-left: 2px;
}

.category-info {
    flex: 1;
}

.category-text {
    display: flex;
    justify-content: space-between;
    height: 20px;
    line-height: 20px;
    padding-right: 3px;
}

.category-text b {
    font-size: 13px;
    color: var(--dark);
}

.bar {
    height: 6px;
    margin-top: 5px;
    border-radius: 3px;
    background-color: #f4f6fc;
}

.bar div {
    height: 6px;
    border-radius: 3px;
    background: linear-gradient(90deg, #1c50ff, #4c78ff);
}

.summary {
    grid-column: 1 / 3;
    grid-row: 2;
    width: 69%;
    display: grid;
    grid-template-columns: 116fr 116fr 111fr 111fr 101fr;
    padding: 9px 16px 12px 14px;
    border-top-left-radius: 0;
}

.summary-item {
    display: flex;
    align-items: center;
    gap: 7px;
    font-size: 10px;
    line-height: 17px;
    white-space: nowrap;
}

.summary-item::after {
    content: "";
    width: 1px;
    height: 22px;
    margin-left: auto;
    margin-right: 12px;
    background-color: #eff2f9;
}

.summary-item:last-child::after {
    margin-right: 0;
}

.summary-item b {
    display: block;
    font-size: 15px;
    line-height: 20px;
    color: var(--dark);
}

.mini {
    display: flex;
    align-items: center;
    justify-content: center;
    width: 31px;
    height: 32px;
    margin-right: 4px;
    border-radius: 8px;
    flex-shrink: 0;
}

.mini .icon {
    width: 18px;
    height: 18px;
    stroke-width: 2;
}

.m-blue { background-color: #edf1ff; color: #1c50ff; }
.m-green { background-color: #e6f8ea; color: #16ab45; }
.m-orange { background-color: #fff3e1; color: #ff9500; }
.m-red { background-color: #ffecec; color: #f0303a; }
.m-purple { background-color: #f2edff; color: #6d3af5; }

/* Bottom row */
.bottom {
    display: grid;
    grid-template-columns: 612fr 599fr;
    gap: 20px;
    margin-top: 15px;
}

.recent {
    padding: 12px 13px 11px 12px;
}

.recent .card-head {
    padding-left: 7px;
}

.view-all {
    width: 66px;
    height: 27px;
    border: 1px solid var(--border);
    border-radius: 5px;
    background-color: #fefefe;
    color: var(--dark);
    font-size: 11px;
    font-weight: 500;
}

table {
    width: 100%;
    margin-top: 11px;
    table-layout: fixed;
    border-collapse: collapse;
    font-size: 10px;
}

.c1 { width: 93px; }
.c2 { width: 87px; }
.c3 { width: 81px; }
.c4 { width: 79px; }
.c5 { width: 85px; }
.c6 { width: 100px; }
.c7 { width: 60px; }

th {
    height: 27px;
    padding-left: 10px;
    background-color: #f8f9fd;
    text-align: left;
    font-size: 9px;
    font-weight: 400;
}

td {
    height: 37px;
    padding-left: 10px;
    border-bottom: 1px solid #eff1f9;
    white-space: nowrap;
}

.tag {
    display: inline-block;
    height: 21px;
    padding: 0 6px;
    border-radius: 4px;
    font-size: 9px;
    line-height: 21px;
}

.completed { background-color: #e3f8e8; color: #119c3e; }
.pending { background-color: #fff4e2; color: #ff950a; }
.cancelled { background-color: #ffeaea; color: #e8232c; }

.dots-btn {
    display: flex;
    align-items: center;
    justify-content: center;
    gap: 2px;
    width: 39px;
    height: 23px;
    border: 1px solid var(--border);
    border-radius: 5px;
    background-color: #fefefe;
}

.dots-btn i {
    width: 3px;
    height: 3px;
    border-radius: 50%;
    background-color: var(--dark);
}

.view-orders {
    display: flex;
    align-items: center;
    justify-content: center;
    gap: 18px;
    width: 40%;
    height: 27px;
    margin: 9px auto 0;
    border: 1px solid var(--border);
    border-radius: 6px;
    background-color: #fefefe;
    color: var(--primary);
    font-size: 11px;
}

.view-orders .icon {
    width: 14px;
    height: 14px;
}

.revenue {
    padding: 12px 19px 12px 16px;
}

.revenue .card-head {
    padding-left: 4px;
}

.revenue-body {
    display: flex;
    gap: 24px;
    margin-top: 19px;
}

.revenue-side {
    width: 130px;
    flex-shrink: 0;
    padding-top: 11px;
}

.revenue-total {
    padding-left: 4px;
    white-space: nowrap;
}

.revenue-body .chart {
    flex: 1;
    min-width: 0;
    align-self: flex-start;
}

.change {
    display: flex;
    align-items: center;
    gap: 12px;
    height: 16px;
    margin-top: 8px;
}

.average {
    margin-top: 25px;
    padding: 13px 12px 14px;
    border-radius: 7px;
    background-color: #f0f3ff;
    white-space: nowrap;
}

.revenue-label {
    font-size: 11px;
    line-height: 16px;
    color: var(--dark);
}

.average-value {
    font-size: 14px;
    line-height: 20px;
    margin-top: 5px;
    font-weight: 700;
    color: var(--dark);
}

.average .change {
    gap: 8px;
}

.average .pct {
    font-size: 11px;
}

.average .vs {
    font-size: 10px;
}

.footer {
    display: flex;
    align-items: center;
    justify-content: center;
    gap: 15px;
    height: 46px;
    padding-right: 248px;
    font-size: 12px;
    color: var(--muted);
}

.footer a {
    margin-left: 4px;
}
```
